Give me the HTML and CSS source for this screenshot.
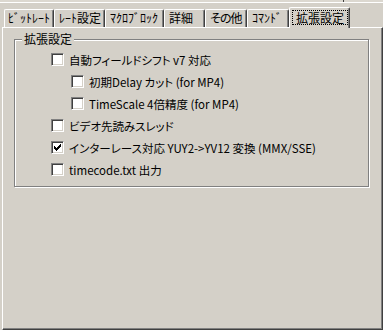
FILE: index.html
```html
<!DOCTYPE html>
<html lang="ja">
<head>
    <meta charset="UTF-8">
    <title>拡張設定</title>
    <link rel="stylesheet" href="styles.css">
</head>
<body>
    <div class="top-edge"><span class="top-left"></span></div>

    <!-- Tabs -->
    <div class="tabs">
        <div class="tab t1">ﾋﾞｯﾄﾚｰﾄ</div>
        <div class="tab t2">ﾚｰﾄ設定</div>
        <div class="tab t3">ﾏｸﾛﾌﾞﾛｯｸ</div>
        <div class="tab t4">詳細</div>
        <div class="tab t5">その他</div>
        <div class="tab t6">ｺﾏﾝﾄﾞ</div>
        <div class="tab active"><span class="focus">拡張設定</span></div>
    </div>

    <!-- Page -->
    <div class="panel">
        <div class="group">
            <span class="legend">拡張設定</span>
            <div class="row"><span class="box"></span>自動フィールドシフト v7 対応</div>
            <div class="row sub"><span class="box"></span>初期Delay カット (for MP4)</div>
            <div class="row sub"><span class="box"></span>TimeScale 4倍精度 (for MP4)</div>
            <div class="row"><span class="box"></span>ビデオ先読みスレッド</div>
            <div class="row"><span class="box checked"><svg width="7" height="7" viewBox="0 0 7 7"><path d="M6 0h1v1h-1z M5 1h2v1h-2z M0 2h1v1h-1z M4 2h3v1h-3z M0 3h2v1h-2z M3 3h3v1h-3z M0 4h5v1h-5z M1 5h3v1h-3z M2 6h1v1h-1z" fill="#000"/></svg></span>インターレース対応 YUY2-&gt;YV12 変換 (MMX/SSE)</div>
            <div class="row"><span class="box"></span>timecode.txt 出力</div>
        </div>
    </div>
</body>
</html>
```

FILE: styles.css
```css
body {
    margin: 0;
    width: 383px;
    height: 330px;
    overflow: hidden;
    background-color: #d4d0c8;
    font-family: "Noto Sans CJK JP", sans-serif;
    font-size: 11.5px;
    font-feature-settings: "palt";
    color: #000;
}
.top-edge {
    display: flex;
    height: 2px;
    border-bottom: 1px solid #ffffff;
    background-color: #dcd8d0;
}
.top-left {
    width: 343px;
    border-right: 1px solid #404040;
}
.tabs {
    display: flex;
    align-items: flex-end;
    height: 24px;
    padding-left: 4px;
}
.tab {
    box-sizing: border-box;
    height: 18px;
    padding-left: 4px;
    border-top: 1px solid #ffffff;
    border-left: 1px solid #ffffff;
    border-right: 1px solid #404040;
    border-top-left-radius: 2px;
    border-top-right-radius: 2px;
    box-shadow: inset -1px 0 0 #808080;
    line-height: 15px;
    font-size: 12px;
    white-space: nowrap;
}
.t1 { width: 50px; padding-left: 3px; }
.t2 { width: 51px; }
.t3 { width: 59px; }
.t4 { width: 41px; }
.t5 { width: 42px; letter-spacing: -1px; }
.t6 { width: 42px; }
.active {
    width: 61px;
    height: 21px;
    margin-bottom: -1px;
    position: relative;
    z-index: 2;
    background-color: #d4d0c8;
    padding: 2px 0 0 3px;
}
.focus {
    display: inline-block;
    padding: 0 3px;
    line-height: 13px;
    outline: 1px dotted #000;
}
.panel {
    box-sizing: border-box;
    margin-left: 2px;
    width: 381px;
    height: 303px;
    border-top: 1px solid #ffffff;
    border-left: 1px solid #ffffff;
    border-right: 1px solid #404040;
    border-bottom: 1px solid #404040;
    box-shadow: inset -1px -1px 0 #808080;
    padding: 11px 0 0 11px;
}
.group {
    position: relative;
    box-sizing: border-box;
    width: 355px;
    height: 148px;
    border: 1px solid #808080;
    box-shadow: 1px 1px 0 #ffffff, inset 1px 1px 0 #ffffff;
    padding: 13px 0 0 36px;
}
.legend {
    position: absolute;
    left: 7px;
    top: -8px;
    padding: 0 2px;
    font-size: 12px;
    line-height: 14px;
    background-color: #d4d0c8;
}
.row {
    display: flex;
    align-items: center;
    height: 13px;
    margin-bottom: 9px;
    white-space: nowrap;
}
.row.sub {
    margin-left: 20px;
}
.box {
    box-sizing: border-box;
    flex: none;
    width: 13px;
    height: 13px;
    margin-right: 5px;
    background-color: #ffffff;
    border-top: 1px solid #808080;
    border-left: 1px solid #808080;
    border-bottom: 1px solid #ffffff;
    border-right: 1px solid #ffffff;
    box-shadow: inset 1px 1px 0 #404040, inset -1px -1px 0 #d4d0c8;
    padding: 2px 0 0 2px;
}
.box svg {
    display: block;
    shape-rendering: crispEdges;
}
```
